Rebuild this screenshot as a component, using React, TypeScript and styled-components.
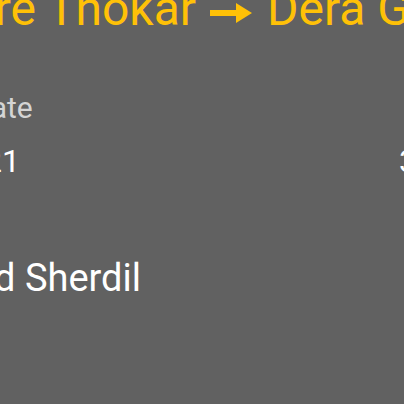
import React from "react";
import styled, { createGlobalStyle } from "styled-components";

const Global = createGlobalStyle`
  html, body { margin: 0; padding: 0; background: #616161; overflow: hidden; }
  body { font-family: Roboto, "Noto Sans", sans-serif; }
`;

const Screen = styled.div`
  width: 404px;
  height: 404px;
  overflow: hidden;
  background: #616161;
`;

const Content = styled.div`
  display: flex;
  flex-direction: column;
  margin: -15px 0 0 0;
`;

const Title = styled.h1`
  margin: 0 0 0 -88px;
  font-size: 48px;
  line-height: 48px;
  font-weight: 400;
  color: #ffc107;
  white-space: nowrap;
`;

const Arrow = styled.svg`
  width: 42px;
  height: 20px;
  margin: 0 15px 0 14px;
  vertical-align: 2px;
  fill: #ffc107;
`;

const FieldRow = styled.div`
  display: flex;
  margin: 57px 0 0 -29px;
`;

const Field = styled.div<{ $width?: number }>`
  display: flex;
  flex-direction: column;
  width: ${(p) => p.$width ?? 200}px;
  flex: none;
`;

const Label = styled.div`
  font-size: 30px;
  line-height: 36px;
  height: 36px;
  color: #d4d4d4;
  white-space: nowrap;
`;

const Value = styled.div<{ $indent?: number }>`
  font-size: 32px;
  line-height: 40px;
  margin-top: 15px;
  padding-left: ${(p) => p.$indent ?? 0}px;
  color: #ffffff;
  white-space: nowrap;
`;

const Name = styled.div`
  margin: 75px 0 0 -189px;
  font-size: 38px;
  line-height: 44px;
  color: #ffffff;
  white-space: nowrap;
`;

export default function App() {
  return (
    <Screen>
      <Global />
      <Content>
        <Title>
          Khare Thokar
          <Arrow viewBox="0 0 42 20" aria-hidden>
            <path d="M0 7 H26 V0 L42 10 L26 20 V13 H0 Z" />
          </Arrow>
          Dera Ghazi Khan
        </Title>
        <FieldRow>
          <Field $width={428}>
            <Label>Date</Label>
            <Value $indent={13}>21</Value>
          </Field>
          <Field>
            <Label />
            <Value>3:30 PM</Value>
          </Field>
        </FieldRow>
        <Name>Muhammad Sherdil</Name>
      </Content>
    </Screen>
  );
}
